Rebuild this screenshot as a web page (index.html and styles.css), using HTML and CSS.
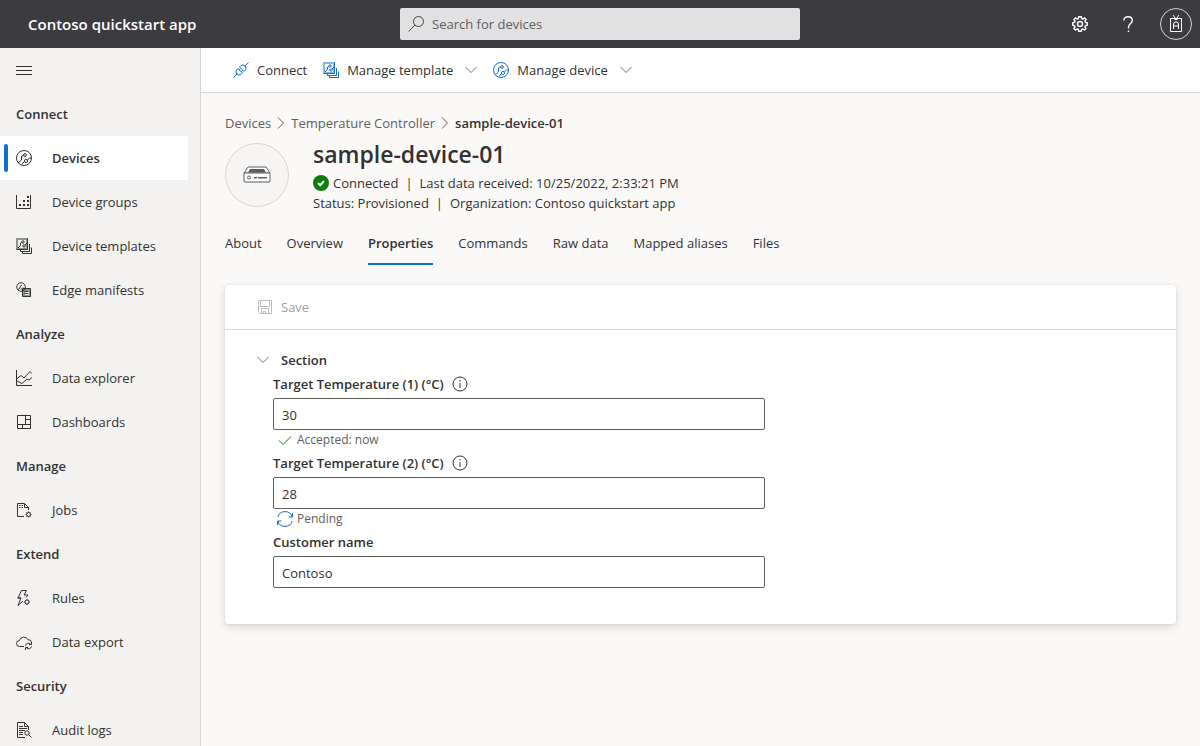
FILE: index.html
```
<!DOCTYPE html>
<html lang="en">
<head>
  <meta charset="UTF-8" />
  <meta name="viewport" content="width=device-width, initial-scale=1" />
  <title>sample-device-01 - Contoso quickstart app</title>
  <link rel="stylesheet" href="styles.css">
</head>
<body>
  <!-- shared icons -->
  <svg class="sprite" aria-hidden="true">
    <symbol id="i-device" viewBox="0 0 16 16">
      <circle cx="8" cy="8" r="7.5"/>
      <circle cx="9" cy="5" r="1.4"/>
      <circle cx="10" cy="11" r="1.6"/>
      <path d="M7.6 5.4 5.5 6v4L2 13M11.3 10.2l2-2.2h2M8.5 11.3l-2.5 3"/>
    </symbol>
    <symbol id="i-template" viewBox="0 0 16 16">
      <path class="tint" d="M0 0h12v12H0zM2 2v8h8V2z" fill-rule="evenodd"/>
      <circle cx="7" cy="4" r="1.2"/>
      <circle cx="8" cy="8" r="1.2"/>
      <path d="M5.800 4.500 4.500 5v2.500L2 10M9 7l2-2M.5 11.500h11V.5M4.500 12v1.500h9V6M6.500 14v1.500h9v-6"/>
    </symbol>
    <symbol id="i-chevron" viewBox="0 0 12 12">
      <path d="M.5 3 6 8.500 11.500 3"/>
    </symbol>
    <symbol id="i-next" viewBox="0 0 8 12">
      <path d="M1 .5 6.500 6 1 11.500"/>
    </symbol>
    <symbol id="i-info" viewBox="0 0 16 16">
      <circle cx="8" cy="8" r="7"/>
      <path d="M8 7v5M8 4v1.500"/>
    </symbol>
  </svg>

  <header class="topbar">
    <a class="app-name" href="#">Contoso quickstart app</a>
    <div class="search">
      <svg class="icon" viewBox="0 0 16 16"><circle cx="10.500" cy="5.500" r="5"/><path d="M7 9 .5 15.500"/></svg>
      <input type="search" placeholder="Search for devices" aria-label="Search for devices">
    </div>
    <div class="topbar-actions">
      <button type="button" aria-label="Settings">
        <svg class="icon gear" viewBox="0 0 16 16">
          <path d="M6.700.7h2.600l.4 1.900 1.200.5 1.600-1.100 1.600 1.600L13 5.200l.4 1.200 1.900.4v2.500l-1.900.4-.5 1.200 1.100 1.600-1.600 1.600-1.600-1.100-1.200.5-.4 1.800H6.700l-.4-1.900-1.200-.4-1.600 1.100-1.600-1.600L3 10.900l-.5-1.200-1.800-.4V6.700l1.900-.4.4-1.200L1.900 3.500l1.600-1.600 1.600 1.100 1.200-.4z"/>
          <circle cx="8" cy="8" r="2.500"/>
        </svg>
      </button>
      <button type="button" aria-label="Help">
        <svg class="icon help" viewBox="0 0 16 16"><path d="M3.800 4.500C3.800 2 5.500.7 8 .7s4.300 1.400 4.300 3.700C12.300 7.500 8.500 8 8.500 11v1.500M8.500 14.500V16"/></svg>
      </button>
      <button type="button" class="avatar" aria-label="Account">
        <svg class="icon" viewBox="0 0 16 18">
          <path d="M2.500 3.500h11v13h-11zM5 0l3 4.500L11 0M6.500 4.500h3M5.500 14V9q0-2 2.500-2t2.500 2v5M5.500 11h5"/>
        </svg>
      </button>
    </div>
  </header>

  <div class="shell">
    <nav class="sidebar">
      <button type="button" class="menu-toggle" aria-label="Toggle menu">
        <svg class="icon" viewBox="0 0 16 16"><path d="M0 4.500h16M0 8.500h16M0 12.500h16"/></svg>
      </button>

      <h2>Connect</h2>
      <a class="active" href="#"><svg class="icon"><use href="#i-device"/></svg>Devices</a>
      <a href="#">
        <svg class="icon" viewBox="0 0 16 16">
          <path d="M.5 1v13.500h14V1"/>
          <path class="solid" d="M3 10h2v2H3zM7 10h2v2H7zM11 10h2v2h-2zM7 6h2v2H7zM11 6h2v2h-2zM11 2h2v2h-2z"/>
        </svg>Device groups
      </a>
      <a href="#"><svg class="icon"><use href="#i-template"/></svg>Device templates</a>
      <a href="#">
        <svg class="icon" viewBox="0 0 16 16">
          <path class="tint" d="M7 7h8v8H7zM9 9v4h4V9z" fill-rule="evenodd"/>
          <circle cx="5" cy="5" r="4.300"/>
          <path d="M2 7.500 4 6V4.500L6 3M5 7.500l2-2"/>
          <path d="M6.500 6.500h8v8h-8zM8.500 9.500h4M8.500 11.500h4"/>
        </svg>Edge manifests
      </a>

      <h2>Analyze</h2>
      <a href="#">
        <svg class="icon" viewBox="0 0 16 16"><path d="M.5 0v15.500H16M.5 9 5 5.500 8 8l6-6.500L16 3.500M1 11l5 2.500L11 9l2 1 3-2.500"/></svg>Data explorer
      </a>
      <a href="#">
        <svg class="icon" viewBox="0 0 16 16"><path d="M1.500 1.500h13v13h-13zM9.500 1.500v9M1.500 10.500h13M9.500 5.500h5M6.500 10.500v4"/></svg>Dashboards
      </a>

      <h2>Manage</h2>
      <a href="#">
        <svg class="icon" viewBox="0 0 16 16">
          <path d="M8 14.500H1.500v-13h7l4 4V8M8.500 1.500v4h4M3 3.500h1.500M5.500 3.500H7M3 5.500h1.500M5.500 5.500H7"/>
          <circle cx="12.500" cy="12.500" r="2"/>
          <path d="M12.500 9.500v1M12.500 14.500v1M9.500 12.500h1M14.500 12.500h1M10.500 10.500l.7.7M13.800 13.800l.7.7M10.500 14.500l.7-.7M13.800 11.200l.7-.7"/>
        </svg>Jobs
      </a>

      <h2>Extend</h2>
      <a href="#">
        <svg class="icon" viewBox="0 0 16 16">
          <path d="M10.500.5h-5L2 8h3l-3 7.500L7 11M10.500.5 8 5h4l-2 2.500M1.500 8H5"/>
          <circle cx="11" cy="12" r="2"/>
          <path d="M11 9v1M11 14v1M8 12h1M13 12h1M9 10l.6.6M12.400 13.400l.6.6M9 14l.6-.6M12.400 10.600l.6-.6"/>
        </svg>Rules
      </a>
      <a href="#">
        <svg class="icon" viewBox="0 0 16 16">
          <path d="M8 12.500H3.500a3 3 0 0 1 0-6 4.500 4.500 0 0 1 8.500-.7 3 3 0 0 1 3.500 2.700"/>
          <path d="M9.500 11.500a3 3 0 0 1 5-1.500M15.500 8v2.500H13M15.500 12.500a3 3 0 0 1-5 1.500M9.500 16v-2.500H12"/>
        </svg>Data export
      </a>

      <h2>Security</h2>
      <a href="#">
        <svg class="icon" viewBox="0 0 16 16">
          <path d="M9 15.500H1.500V.5h7l4 4V8M8.500.5v4h4M3 4.500h4M3 6.500h8M3 8.500h6M3 10.500h4M3 12.500h4"/>
          <circle cx="11" cy="11" r="2.200"/>
          <path d="m12.600 12.600 2.900 2.900"/>
        </svg>Audit logs
      </a>
    </nav>

    <main class="content">
      <div class="commandbar">
        <button type="button">
          <svg class="icon blue" viewBox="0 0 16 16">
            <path d="M.5 15.500 4 12M12 4 15.500.5M5 6.500 9.500 11 8 12.500q-2 1.500-4-.5t-.5-4zM6.500 5 8 3.500q2-1.500 4 .5t.5 4L11 9.500zM6 8l1.500-1.500M8 10l1.500-1.500"/>
          </svg>Connect
        </button>
        <button type="button">
          <svg class="icon blue"><use href="#i-template"/></svg>Manage template
          <svg class="chevron"><use href="#i-chevron"/></svg>
        </button>
        <button type="button">
          <svg class="icon blue"><use href="#i-device"/></svg>Manage device
          <svg class="chevron"><use href="#i-chevron"/></svg>
        </button>
      </div>

      <div class="page">
        <nav class="breadcrumb" aria-label="Breadcrumb">
          <a href="#">Devices</a>
          <svg class="next"><use href="#i-next"/></svg>
          <a href="#">Temperature Controller</a>
          <svg class="next"><use href="#i-next"/></svg>
          <span>sample-device-01</span>
        </nav>

        <div class="device">
          <div class="device-image">
            <svg viewBox="0 0 28 18">
              <path class="lid" d="M5 1h18l4 6H1z"/>
              <path class="slot" d="M7 3h14l2 3.500H5z"/>
              <rect class="lid" x="1" y="7" width="26" height="9" rx="1"/>
              <circle class="lid" cx="6" cy="11.500" r="1.500"/>
              <path class="slot" d="M11 11h3v1.500h-3zM15 11h9v1.500h-9z"/>
            </svg>
          </div>
          <div class="device-info">
            <h1>sample-device-01</h1>
            <p>
              <svg class="check-badge" viewBox="0 0 16 16"><circle cx="8" cy="8" r="8"/><path d="m5 8 2.200 2.200L11 6"/></svg>
              <span>Connected</span><span class="bar">|</span><span>Last data received: 10/25/2022, 2:33:21 PM</span>
            </p>
            <p><span>Status: Provisioned</span><span class="bar">|</span><span>Organization: Contoso quickstart app</span></p>
          </div>
        </div>

        <nav class="tabs">
          <a href="#">About</a>
          <a href="#">Overview</a>
          <a class="active" href="#">Properties</a>
          <a href="#">Commands</a>
          <a href="#">Raw data</a>
          <a href="#">Mapped aliases</a>
          <a href="#">Files</a>
        </nav>

        <form class="card">
          <div class="card-bar">
            <button type="submit" disabled>
              <svg class="icon" viewBox="0 0 16 16"><path d="M1.500 1.500h13v13h-12l-1-1zM3.500 1.500v6h9v-6M4.500 14.500v-5h7v5M6.500 14.500v-2h2v2"/></svg>Save
            </button>
          </div>
          <div class="card-body">
            <button type="button" class="section-toggle" aria-expanded="true">
              <svg class="chevron"><use href="#i-chevron"/></svg>Section
            </button>
            <div class="fields">
              <div class="label-row">
                <label for="target-1">Target Temperature (1) (°C)</label>
                <svg class="info"><use href="#i-info"/></svg>
              </div>
              <input type="text" id="target-1" value="30">
              <div class="status">
                <svg class="icon green" viewBox="0 0 16 16"><path d="M2 8.500 6 12.500 14 4.500"/></svg>Accepted: now
              </div>
              <div class="label-row">
                <label for="target-2">Target Temperature (2) (°C)</label>
                <svg class="info"><use href="#i-info"/></svg>
              </div>
              <input type="text" id="target-2" value="28">
              <div class="status">
                <svg class="icon blue" viewBox="0 0 16 16"><path d="M.8 6a7.500 7.500 0 0 1 14.400 0M15.500 2v4h-4M15.200 10a7.500 7.500 0 0 1-14.400 0M.5 14v-4h4"/></svg>Pending
              </div>
              <div class="label-row">
                <label for="customer">Customer name</label>
              </div>
              <input type="text" id="customer" value="Contoso">
            </div>
          </div>
        </form>
      </div>
    </main>
  </div>
</body>
</html>
```

FILE: styles.css
```
* {
  box-sizing: border-box;
}
body {
  margin: 0;
  height: 100vh;
  display: flex;
  flex-direction: column;
  overflow: hidden;
  background: #faf9f8;
  color: #323130;
  font-family: "Segoe UI", "Open Sans", "Noto Sans", sans-serif;
  font-size: 13px;
  line-height: 20px;
}
a {
  color: inherit;
  text-decoration: none;
}
button {
  padding: 0;
  border: 0;
  background: none;
  color: inherit;
  font: inherit;
  cursor: pointer;
}
h1, h2, p {
  margin: 0;
}
svg {
  flex: none;
  fill: none;
  stroke: currentColor;
}
.sprite {
  position: absolute;
  width: 0;
  height: 0;
}
.icon {
  width: 16px;
  height: 16px;
}
.tint {
  fill: currentColor;
  fill-opacity: 0.5;
  stroke: none;
}
.solid {
  fill: currentColor;
  stroke: none;
}
.blue {
  color: #0f6fce;
}
.green {
  color: #107c10;
}
.chevron {
  width: 12px;
  height: 12px;
  color: #8a6a4a;
}

/* top bar */
.topbar {
  flex: none;
  display: grid;
  grid-template-columns: 1fr minmax(200px, 400px) 1fr;
  align-items: center;
  height: 48px;
  background: #3c3b40;
  color: #fff;
}
.app-name {
  padding-left: 28px;
  font-size: 15px;
  font-weight: 600;
}
.search {
  display: flex;
  align-items: center;
  gap: 8px;
  height: 32px;
  padding: 0 8px;
  border-radius: 2px;
  background: #e1e1e1;
  color: #484644;
}
.search input {
  flex: 1;
  min-width: 0;
  padding: 0;
  border: 0;
  outline: 0;
  background: none;
  color: #323130;
  font: inherit;
}
.search input::placeholder {
  color: #605e5c;
  opacity: 1;
}
.topbar-actions {
  display: flex;
  justify-content: flex-end;
  padding-right: 8px;
}
.topbar-actions button {
  display: flex;
  align-items: center;
  justify-content: center;
  width: 48px;
  height: 32px;
}
.gear, .help {
  stroke-width: 1.4;
}
.topbar-actions .avatar {
  width: 32px;
  margin-left: 8px;
  border: 1px solid #d0d0d0;
  border-radius: 50%;
}
.avatar .icon {
  height: 18px;
}

/* left navigation */
.shell {
  flex: 1;
  display: flex;
  min-height: 0;
}
.sidebar {
  flex: none;
  width: 201px;
  overflow: hidden;
  border-right: 1px solid #d8d6d4;
  background: #f3f2f1;
}
.menu-toggle {
  display: flex;
  align-items: center;
  height: 44px;
  padding: 0 16px;
}
.sidebar h2 {
  padding-left: 16px;
  font-size: 13px;
  font-weight: 600;
  line-height: 44px;
}
.sidebar a {
  position: relative;
  display: flex;
  align-items: center;
  gap: 20px;
  height: 44px;
  margin-right: 12px;
  padding-left: 16px;
}
.sidebar .active {
  background: #fff;
  font-weight: 600;
}
.sidebar .active::before {
  content: "";
  position: absolute;
  top: 8px;
  bottom: 8px;
  left: 4px;
  width: 4px;
  border-radius: 2px;
  background: #0f6fce;
}

/* main area */
.content {
  flex: 1;
  min-width: 0;
  overflow: hidden;
}
.commandbar {
  display: flex;
  gap: 16px;
  height: 45px;
  padding: 0 32px;
  border-bottom: 1px solid #d8d6d4;
  background: #fff;
}
.commandbar button {
  display: flex;
  align-items: center;
  gap: 8px;
}
.commandbar .chevron {
  margin-left: 4px;
}
.page {
  padding: 20px 24px;
}
.breadcrumb {
  display: flex;
  align-items: center;
  gap: 6px;
  color: #605e5c;
}
.breadcrumb span {
  color: #323130;
  font-weight: 600;
}
.next {
  width: 8px;
  height: 12px;
}
.device {
  display: flex;
  gap: 24px;
  margin-top: 10px;
}
.device-image {
  display: flex;
  align-items: center;
  justify-content: center;
  width: 64px;
  height: 64px;
  border: 1px solid #d8d6d4;
  border-radius: 50%;
  background: #f6f5f4;
}
.device-image svg {
  width: 28px;
  height: 18px;
}
.lid {
  fill: #fff;
  stroke: #605e5c;
}
.slot {
  fill: #605e5c;
  stroke: none;
}
.device-info h1 {
  margin-bottom: 8px;
  font-size: 23px;
  font-weight: 600;
  line-height: 22px;
}
.device-info p {
  display: flex;
  align-items: center;
}
.check-badge {
  width: 16px;
  height: 16px;
  margin-right: 4px;
  fill: #107c10;
  stroke: none;
}
.check-badge path {
  fill: none;
  stroke: #fff;
  stroke-width: 2;
}
.bar {
  margin: 0 7px;
}
.tabs {
  display: flex;
  gap: 25px;
  margin-top: 8px;
}
.tabs a {
  height: 44px;
  line-height: 44px;
}
.tabs .active {
  border-bottom: 2px solid #0f6fce;
  font-weight: 600;
}

/* properties card */
.card {
  margin-top: 20px;
  border-radius: 4px;
  background: #fff;
  box-shadow: 0 3px 8px rgba(0, 0, 0, 0.14), 0 0 2px rgba(0, 0, 0, 0.1);
}
.card-bar {
  display: flex;
  height: 45px;
  padding: 0 32px;
  border-bottom: 1px solid #d8d6d4;
}
.card-bar button {
  display: flex;
  align-items: center;
  gap: 8px;
  color: #a19f9d;
}
.card-bar .icon {
  color: #bebbb8;
}
.card-body {
  padding: 20px 32px 36px;
}
.section-toggle {
  display: flex;
  align-items: center;
  gap: 12px;
  font-weight: 600;
}
.fields {
  max-width: 508px;
  padding-left: 16px;
}
.label-row {
  display: flex;
  align-items: center;
  gap: 8px;
  height: 28px;
  font-weight: 600;
}
.info {
  width: 16px;
  height: 16px;
}
.fields input {
  display: block;
  width: 100%;
  height: 32px;
  padding: 1px 8px 0;
  border: 1px solid #605e5c;
  border-radius: 2px;
  background: #fff;
  color: inherit;
  font: inherit;
}
.status {
  display: flex;
  align-items: center;
  gap: 4px;
  height: 19px;
  padding: 1px 0 0 4px;
  color: #605e5c;
  font-size: 12px;
}
```
